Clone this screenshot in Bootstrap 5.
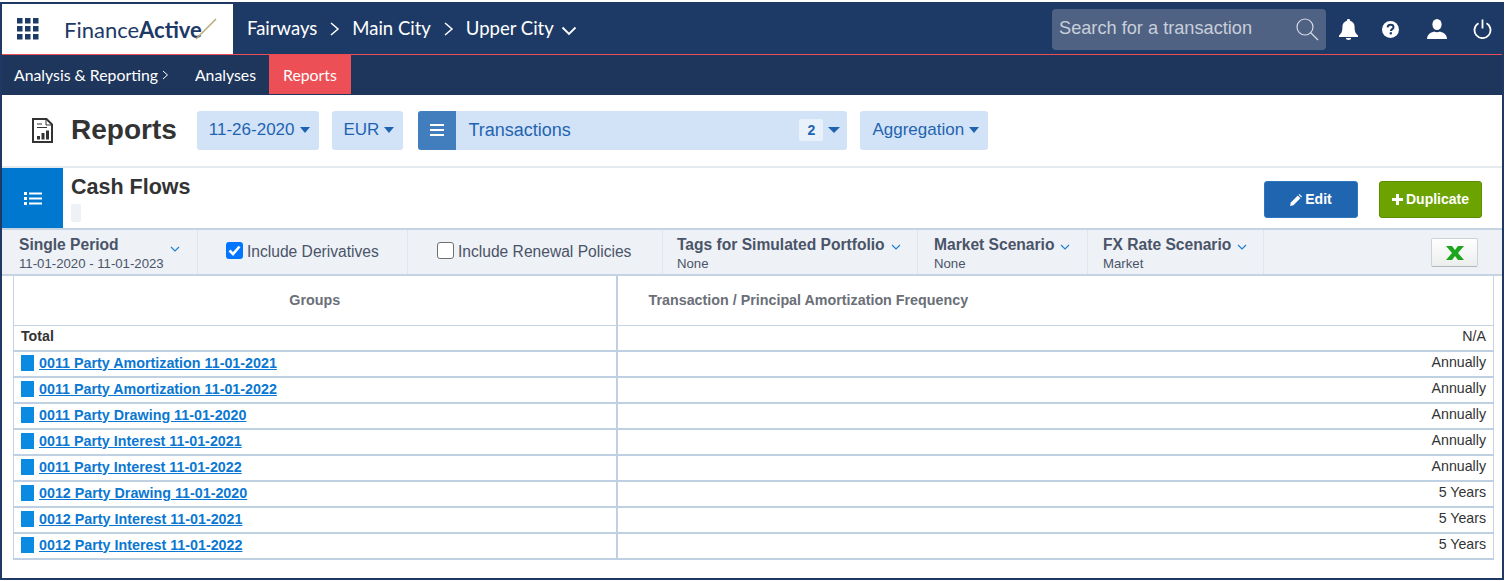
<!DOCTYPE html>
<html lang="en">
<head>
    <meta charset="UTF-8">
    <meta name="viewport" content="width=device-width, initial-scale=1.0">
    <title>Finance Active - Reports</title>
    <link href="https://cdn.jsdelivr.net/npm/bootstrap@5.3.2/dist/css/bootstrap.min.css" rel="stylesheet">
    <style>
        body {
            background: #fff;
            font-family: "Liberation Sans", Arial, sans-serif;
            color: #333;
            overflow: hidden;
        }
        .frame {
            width: 1504px;
            height: 578px;
            margin: 2px 0 0 0;
            border: 2px solid #1f3864;
            overflow: hidden;
        }
        .top-bar { height: 51px; background: #1d3a66; border-bottom: 1px solid #ee4b52; }
        .logo-box { width: 231px; height: 50px; background: #fff; padding-left: 15px; }
        .logo-text { font-family: "Lato", sans-serif; font-size: 22px; color: #1d3a66; margin-left: 25px; font-weight: 400; }
        .logo-text b { font-weight: 700; }
        .logo-slash { margin-left: -8px; flex-shrink: 0; }
        .crumbs { font-family: "Lato", sans-serif; font-size: 18.5px; color: #fff; padding-left: 14px; gap: 12px; }
        .crumb-open { margin: 4px 0 0 -5px; }
        .search-box { width: 274px; height: 41px; background: #4f6283; border-radius: 4px; padding: 0 7px; color: #c9cfda; font-size: 18.2px; }
        .top-icons { margin-right: 2px; }
        .top-icons > span { display: flex; justify-content: center; }
        .top-icons > span:nth-child(1) { width: 44px; }
        .top-icons > span:nth-child(2) { width: 40px; }
        .top-icons > span:nth-child(3) { width: 54px; }
        .top-icons > span:nth-child(4) { width: 36px; }
        .sub-bar { height: 40px; background: #1f365c; font-family: "Lato", sans-serif; font-size: 15.8px; color: #fff; }
        .sub-item { height: 39px; padding: 0 13px 0 14px; display: flex; align-items: center; }
        .sub-item.first { padding: 0 12px 0 12px; }
        .sub-item.on { background: #ec4f56; padding: 0 14px; }
        .filter-bar { height: 73px; border-bottom: 2px solid #e3ebee; padding: 0 0 1px 30px; gap: 13px; }
        .page-name { font-size: 28px; font-weight: 700; color: #333; margin: 0 7px 0 5px; line-height: 1; }
        .pill { height: 39px; background: #d2e3f8; color: #1f63b0; font-size: 17px; border-radius: 3px; border: 0; display: flex; align-items: center; padding: 0 9px 0 12px; white-space: nowrap; }
        .caret-down { width: 0; height: 0; border: 5px solid transparent; border-top: 6px solid #1f63b0; border-bottom: 0; margin-left: 5px; }
        .trans-pill { width: 429px; margin-left: 2px; padding: 0 7px 0 0; overflow: hidden; font-size: 18px; }
        .trans-icon { width: 38px; height: 39px; background: #427dbd; display: flex; flex-direction: column; justify-content: center; align-items: center; gap: 3px; margin-right: 12px; }
        .trans-icon i { display: block; width: 14px; height: 2px; background: #fff; }
        .count-tag { width: 24px; height: 22px; background: #e9f1fb; border-radius: 2px; font-size: 14px; font-weight: 700; text-align: center; line-height: 22px; margin-left: auto; }
        .trans-pill .caret-down { border-width: 6px 6px 0; }
        .title-row { height: 60px; }
        .list-square { width: 61px; height: 60px; background: #0078d0; display: flex; align-items: center; justify-content: center; }
        .report-title { font-size: 21.5px; font-weight: 700; color: #333; line-height: 23px; margin: 8px 0 5px 8px; }
        .empty-tag { width: 10px; height: 18px; background: #eef1f6; border-radius: 2px; margin-left: 8px; }
        .act-wrap { padding-top: 3px; }
        .act-btn { height: 37px; font-size: 14px; font-weight: 700; color: #fff; border-radius: 3px; display: flex; align-items: center; justify-content: center; gap: 3px; padding: 0; }
        .act-edit { width: 94px; background: #2065b0; border: 1px solid #2f76bf; margin-right: 21px; }
        .act-dup { width: 103px; background: #6ca300; border: 1px solid #5d8e00; margin-right: 20px; }
        .tool-row { height: 48px; background: #eef1f6; border-top: 2px solid #c5d3e3; border-bottom: 2px solid #c5d3e3; }
        .tool-cell { height: 44px; border-right: 1px solid #e3e7ed; color: #4a5468; flex: none; }
        .tool-name { font-size: 15.6px; font-weight: 700; line-height: 17px; padding-top: 6px; }
        .tool-sub { font-size: 13.2px; line-height: 15px; margin-top: 3px; }
        .chev { display: inline-block; margin-left: 6px; vertical-align: -1px; }
        .cw-1 { width: 196px; padding-left: 17px; }
        .cw-2 { width: 210px; padding-left: 28px; }
        .cw-3 { width: 255px; padding-left: 29px; }
        .cw-4 { width: 255px; padding-left: 14px; }
        .cw-5 { width: 170px; padding-left: 16px; }
        .cw-6 { width: 176px; padding-left: 15px; }
        .check-label { font-size: 15.6px; display: flex; align-items: center; height: 100%; }
        .fake-box { width: 17px; height: 17px; border-radius: 3px; margin: 0 4px 4px 0; display: flex; align-items: center; justify-content: center; }
        .fake-box.yes { background: #0075ff; }
        .fake-box.no { background: #fff; border: 1px solid #6f6f6f; }
        .xl-wrap { padding-right: 24px; }
        .xl-btn { width: 47px; height: 29px; background: linear-gradient(#fff, #eceded); border: 1px solid #cfd2d4; border-bottom-color: #b4b7ba; border-radius: 2px; display: flex; align-items: center; justify-content: center; margin: 8px 0 0 auto; }
        .grid-wrap { padding: 0 8px 0 11px; }
        .grid-table { width: 1481px; table-layout: fixed; border-collapse: collapse; font-size: 14.2px; margin: 0; border: 1px solid #c5d3e3; border-top: 0; }
        .grid-table th { height: 49px; font-size: 14.3px; color: #6a6f78; font-weight: 700; vertical-align: middle; border-bottom: 1px solid #c5d3e3; padding: 0; }
        .grid-table th.freq-col { padding-left: 31px; }
        .grid-table td { height: 26px; padding: 0 7px 3px; vertical-align: middle; border-bottom: 2px solid #bfd0e3; color: #333; line-height: 1; }
        .grid-table .left-col { width: 603px; border-right: 2px solid #bfd0e3; }
        .row-link { color: #0a78d2; font-weight: 700; font-size: 14.3px; text-decoration: underline; }
        .row-mark { display: inline-block; width: 13px; height: 16px; background: #0a8ae0; margin-right: 5px; vertical-align: -3px; }
    </style>
</head>
<body>
<div class="frame">
    <div class="top-bar d-flex align-items-start">
        <div class="logo-box d-flex align-items-center">
            <svg width="22" height="22" viewBox="0 0 22 22" fill="#1d3a66">
                <rect x="0" y="0" width="5.5" height="5.5"/><rect x="8" y="0" width="5.5" height="5.5"/><rect x="16" y="0" width="5.5" height="5.5"/>
                <rect x="0" y="8" width="5.5" height="5.5"/><rect x="8" y="8" width="5.5" height="5.5"/><rect x="16" y="8" width="5.5" height="5.5"/>
                <rect x="0" y="16" width="5.5" height="5.5"/><rect x="8" y="16" width="5.5" height="5.5"/><rect x="16" y="16" width="5.5" height="5.5"/>
            </svg>
            <span class="logo-text">Finance<b>Active</b></span>
            <svg width="24" height="24" viewBox="0 0 24 24" class="logo-slash"><path d="M2 22 L22 2" stroke="#b9ab7c" stroke-width="1.6"/></svg>
        </div>
        <div class="crumbs d-flex align-items-center h-100">
            <span>Fairways</span>
            <svg width="11" height="16" viewBox="0 0 11 16"><path d="M2 2 L9 8 L2 14" fill="none" stroke="#fff" stroke-width="1.5"/></svg>
            <span>Main City</span>
            <svg width="11" height="16" viewBox="0 0 11 16"><path d="M2 2 L9 8 L2 14" fill="none" stroke="#fff" stroke-width="1.5"/></svg>
            <span>Upper City</span>
            <svg width="16" height="10" viewBox="0 0 16 10" class="crumb-open"><path d="M1.5 1.5 L8 8 L14.5 1.5" fill="none" stroke="#fff" stroke-width="1.8"/></svg>
        </div>
        <div class="ms-auto d-flex align-items-center h-100">
            <div class="search-box d-flex align-items-center justify-content-between">
                <span>Search for a transaction</span>
                <svg width="24" height="24" viewBox="0 0 24 24"><circle cx="10" cy="10" r="8" fill="none" stroke="#d5dae3" stroke-width="1.2"/><path d="M15.5 15.5 L23 23" stroke="#d5dae3" stroke-width="1.2"/></svg>
            </div>
            <div class="top-icons d-flex align-items-center">
                <span><svg width="19" height="21" viewBox="0 0 19 21" fill="#fff"><path d="M9.5 0 a1.6 1.6 0 0 1 1.6 1.8 C14 2.6 15.6 5 15.6 8 C15.6 13 16.8 14.5 19 16.6 V18 H0 V16.6 C2.2 14.5 3.4 13 3.4 8 C3.4 5 5 2.6 7.9 1.8 A1.6 1.6 0 0 1 9.5 0 Z"/><path d="M6.8 19 H12.2 A2.7 2 0 0 1 6.8 19 Z"/></svg></span>
                <span><svg width="17" height="17" viewBox="0 0 17 17"><circle cx="8.5" cy="8.5" r="8.5" fill="#fff"/><path d="M5.6 6.4 C5.8 4.6 7 3.8 8.6 3.8 C10.3 3.8 11.5 4.8 11.5 6.2 C11.5 8 9 8.2 8.8 10" fill="none" stroke="#1d3a66" stroke-width="2"/><rect x="7.7" y="11.2" width="2.2" height="2.2" fill="#1d3a66"/></svg></span>
                <span><svg width="20" height="20" viewBox="0 0 20 20" fill="#fff"><ellipse cx="10" cy="5.5" rx="4.6" ry="5.5"/><path d="M0 20 C0 14.5 5 13.5 7 12.5 C8.5 13.5 11.5 13.5 13 12.5 C15 13.5 20 14.5 20 20 Z"/></svg></span>
                <span><svg width="19" height="20" viewBox="0 0 19 20" fill="none" stroke="#fff" stroke-width="1.8"><path d="M5.5 4.2 A8 8 0 1 0 13.5 4.2"/><path d="M9.5 0.5 V9.5"/></svg></span>
            </div>
        </div>
    </div>

    <div class="sub-bar d-flex">
        <div class="sub-item first">Analysis &amp; Reporting
            <svg width="7" height="10" viewBox="0 0 7 10" class="ms-1"><path d="M1 1 L5.5 5 L1 9" fill="none" stroke="#fff" stroke-width="1"/></svg>
        </div>
        <div class="sub-item">Analyses</div>
        <div class="sub-item on">Reports</div>
    </div>

    <div class="filter-bar d-flex align-items-center">
        <svg width="21" height="25" viewBox="0 0 21 25" fill="none">
            <path d="M1 1 H14.5 L20 6.5 V24 H1 Z" stroke="#333" stroke-width="2"/>
            <path d="M14 1 V7 H20 M5 6 H10 M5 9.5 H15" stroke="#333" stroke-width="1"/>
            <rect x="5" y="18" width="3" height="3.5" fill="#333"/><rect x="9.5" y="15" width="3" height="6.5" fill="#333"/><rect x="14" y="12.5" width="3" height="9" fill="#333"/>
        </svg>
        <h1 class="page-name">Reports</h1>
        <button class="pill" type="button">11-26-2020<span class="caret-down"></span></button>
        <button class="pill" type="button">EUR<span class="caret-down"></span></button>
        <div class="pill trans-pill">
            <div class="trans-icon"><i></i><i></i><i></i></div>
            <span>Transactions</span>
            <span class="count-tag">2</span>
            <span class="caret-down"></span>
        </div>
        <button class="pill" type="button">Aggregation<span class="caret-down"></span></button>
    </div>

    <div class="title-row d-flex">
        <div class="list-square">
            <svg width="18" height="15" viewBox="0 0 18 15" fill="#fff">
                <rect x="0" y="1" width="3" height="3"/><rect x="5" y="1.5" width="13" height="2"/>
                <rect x="0" y="6" width="3" height="3"/><rect x="5" y="6.5" width="13" height="2"/>
                <rect x="0" y="11" width="3" height="3"/><rect x="5" y="11.5" width="13" height="2"/>
            </svg>
        </div>
        <div>
            <div class="report-title">Cash Flows</div>
            <div class="empty-tag"></div>
        </div>
        <div class="act-wrap ms-auto d-flex align-items-center">
            <button class="btn act-btn act-edit" type="button">
                <svg width="12" height="12" viewBox="0 0 12 12" fill="#fff"><path d="M0 12 L0.8 8.6 L7.8 1.6 L10.4 4.2 L3.4 11.2 Z"/><path d="M8.6 0.8 L9.4 0 L12 2.6 L11.2 3.4 Z"/></svg>
                Edit
            </button>
            <button class="btn act-btn act-dup" type="button">
                <svg width="11" height="11" viewBox="0 0 11 11" fill="#fff"><rect x="4" y="0" width="3" height="11"/><rect x="0" y="4" width="11" height="3"/></svg>
                Duplicate
            </button>
        </div>
    </div>

    <div class="tool-row d-flex">
        <div class="tool-cell cw-1 d-flex">
            <div>
                <div class="tool-name">Single Period</div>
                <div class="tool-sub">11-01-2020 - 11-01-2023</div>
            </div>
            <svg class="chev mt-3" width="10" height="7" viewBox="0 0 10 7"><path d="M1 1 L5 5 L9 1" fill="none" stroke="#1f7fd0" stroke-width="1.2"/></svg>
        </div>
        <div class="tool-cell cw-2">
            <label class="check-label"><span class="fake-box yes"><svg width="13" height="11" viewBox="0 0 13 11"><path d="M1.5 5.5 L5 9 L11.5 1.5" fill="none" stroke="#fff" stroke-width="2.6"/></svg></span>Include Derivatives</label>
        </div>
        <div class="tool-cell cw-3">
            <label class="check-label"><span class="fake-box no"></span>Include Renewal Policies</label>
        </div>
        <div class="tool-cell cw-4">
            <div class="tool-name">Tags for Simulated Portfolio<svg class="chev" width="10" height="7" viewBox="0 0 10 7"><path d="M1 1 L5 5 L9 1" fill="none" stroke="#1f7fd0" stroke-width="1.2"/></svg></div>
            <div class="tool-sub">None</div>
        </div>
        <div class="tool-cell cw-5">
            <div class="tool-name">Market Scenario<svg class="chev" width="10" height="7" viewBox="0 0 10 7"><path d="M1 1 L5 5 L9 1" fill="none" stroke="#1f7fd0" stroke-width="1.2"/></svg></div>
            <div class="tool-sub">None</div>
        </div>
        <div class="tool-cell cw-6">
            <div class="tool-name">FX Rate Scenario<svg class="chev" width="10" height="7" viewBox="0 0 10 7"><path d="M1 1 L5 5 L9 1" fill="none" stroke="#1f7fd0" stroke-width="1.2"/></svg></div>
            <div class="tool-sub">Market</div>
        </div>
        <div class="xl-wrap flex-grow-1">
            <div class="xl-btn">
                <svg width="20" height="14" viewBox="0 0 20 14"><path d="M1 0 H7 L10 4 L13 0 H19 L13 7 L19 14 H13 L10 10 L7 14 H1 L7 7 Z" fill="#1ea51e"/></svg>
            </div>
        </div>
    </div>

    <div class="grid-wrap">
        <table class="grid-table" id="grid">
            <thead>
                <tr>
                    <th class="left-col text-center">Groups</th>
                    <th class="freq-col">Transaction / Principal Amortization Frequency</th>
                </tr>
            </thead>
            <tbody>
                <tr><td class="left-col fw-bold">Total</td><td class="text-end">N/A</td></tr>
                <tr><td class="left-col"><span class="row-mark"></span><a href="#" class="row-link">0011 Party Amortization 11-01-2021</a></td><td class="text-end">Annually</td></tr>
                <tr><td class="left-col"><span class="row-mark"></span><a href="#" class="row-link">0011 Party Amortization 11-01-2022</a></td><td class="text-end">Annually</td></tr>
                <tr><td class="left-col"><span class="row-mark"></span><a href="#" class="row-link">0011 Party Drawing 11-01-2020</a></td><td class="text-end">Annually</td></tr>
                <tr><td class="left-col"><span class="row-mark"></span><a href="#" class="row-link">0011 Party Interest 11-01-2021</a></td><td class="text-end">Annually</td></tr>
                <tr><td class="left-col"><span class="row-mark"></span><a href="#" class="row-link">0011 Party Interest 11-01-2022</a></td><td class="text-end">Annually</td></tr>
                <tr><td class="left-col"><span class="row-mark"></span><a href="#" class="row-link">0012 Party Drawing 11-01-2020</a></td><td class="text-end">5 Years</td></tr>
                <tr><td class="left-col"><span class="row-mark"></span><a href="#" class="row-link">0012 Party Interest 11-01-2021</a></td><td class="text-end">5 Years</td></tr>
                <tr><td class="left-col"><span class="row-mark"></span><a href="#" class="row-link">0012 Party Interest 11-01-2022</a></td><td class="text-end">5 Years</td></tr>
            </tbody>
        </table>
    </div>
</div>
<script src="https://cdn.jsdelivr.net/npm/bootstrap@5.3.2/dist/js/bootstrap.bundle.min.js"></script>
</body>
</html>
